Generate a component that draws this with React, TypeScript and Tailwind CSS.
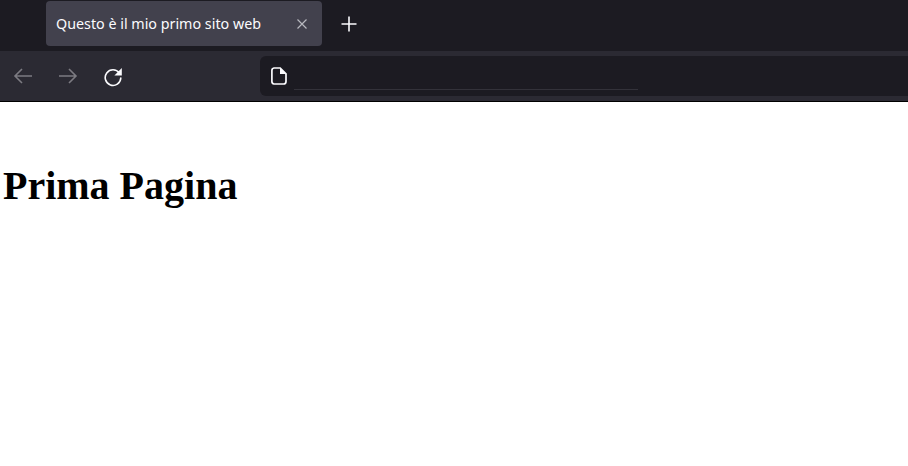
export default function App() {
  return (
    <div className="w-[908px] h-[466px] overflow-hidden bg-white flex flex-col">
      <header className="h-[51px] bg-[#1c1b22] flex items-start pl-[46px] pt-px shrink-0">
        <div className="w-[276px] h-[45px] rounded-[4px] bg-[#42414d] flex items-center pl-[10px] pr-[14px] justify-between">
          <span className="text-[#fbfbfe] text-[14.3px] whitespace-nowrap font-['Noto_Sans',sans-serif]">Questo è il mio primo sito web</span>
          <svg width="12" height="12" viewBox="0 0 12 12" fill="none" stroke="#b8b8bf" strokeWidth="1.2">
            <path d="M1.5 1.5l9 9M10.5 1.5l-9 9" />
          </svg>
        </div>
        <div className="w-[53px] h-[45px] flex items-center justify-center">
          <svg width="16" height="16" viewBox="0 0 16 16" fill="none" stroke="#fbfbfe" strokeWidth="1.6">
            <path d="M8 .5v15M.5 8h15" />
          </svg>
        </div>
      </header>
      <nav className="h-[51px] bg-[#2b2a33] border-b border-black flex items-center shrink-0">
        <div className="w-[260px] flex items-center pl-[13px] shrink-0">
          <svg width="20" height="18" viewBox="0 0 20 18" fill="none" stroke="#7c7b82" strokeWidth="1.6" className="mr-[25px]">
            <path d="M19 9H2M9 2 2 9l7 7" />
          </svg>
          <svg width="20" height="18" viewBox="0 0 20 18" fill="none" stroke="#7c7b82" strokeWidth="1.6" className="mr-[25px]">
            <path d="M1 9h17M11 2l7 7-7 7" />
          </svg>
          <svg width="20" height="20" viewBox="0 0 20 20" fill="none" className="mt-[2px]">
            <path d="M16.3 6A7.8 7.8 0 1 0 17.8 11" stroke="#fbfbfe" strokeWidth="1.6" strokeLinecap="round" />
            <path d="M18.8 1v7.4h-7.4z" fill="#fbfbfe" />
          </svg>
        </div>
        <div className="flex-1 h-10 bg-[#1c1b22] rounded-l-[6px] flex pl-[11px] items-center relative">
          <svg width="16" height="18" viewBox="0 0 16 18" fill="none" stroke="#fbfbfe" strokeWidth="1.7">
            <path d="M3 1h6.2L15 6.8V14.5a2.5 2.5 0 0 1-2.5 2.5H3A2.5 2.5 0 0 1 .9 14.5V3.5A2.5 2.5 0 0 1 3 1Z" />
            <path d="M9 1v6h6z" fill="#fbfbfe" stroke="none" />
          </svg>
          <div className="absolute left-[34px] top-[33px] w-[344px] h-px bg-[#33323a]" />
        </div>
      </nav>
      <main className="flex-1 bg-white pl-[3px]">
        <h1 className="mt-[61px] font-['Liberation_Serif',serif] font-bold text-[40px] leading-[46px] text-black">Prima Pagina</h1>
      </main>
    </div>
  );
}
